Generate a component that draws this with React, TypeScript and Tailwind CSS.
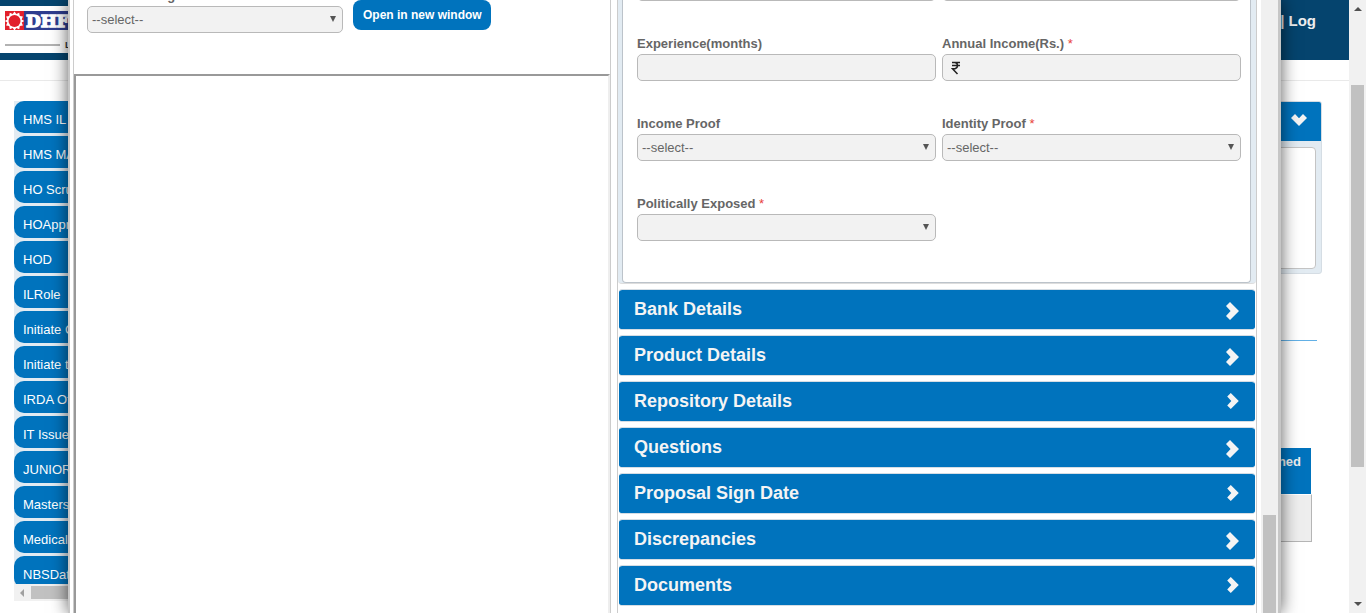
import type { ReactNode } from "react";

const roles = [
  "HMS IL", "HMS MA", "HO Scru", "HOAppr", "HOD", "ILRole", "Initiate C",
  "Initiate t", "IRDA Of", "IT Issue", "JUNIOR", "Masters", "Medical", "NBSDat",
];

const sections = [
  { title: "Bank Details", large: true },
  { title: "Product Details", large: true },
  { title: "Repository Details", large: false },
  { title: "Questions", large: true },
  { title: "Proposal Sign Date", large: false },
  { title: "Discrepancies", large: true },
  { title: "Documents", large: false },
];

function Arrow({ d, className }: { d: string; className: string }) {
  return (
    <svg viewBox="0 0 8 8" className={`h-2 w-2 ${className}`} aria-hidden="true">
      <path d={d} fill="currentColor" />
    </svg>
  );
}

function Logo() {
  return (
    <svg viewBox="0 0 112 46" className="h-[46px] w-28" role="img" aria-label="DHFL">
      <rect x="5" y="5" width="19" height="19" fill="#e2202c" />
      <path
        d="M14.5 5.5l1.8 2.5 2.9-1.2.6 3.1 3.1.6-1.2 2.9 2.5 1.6-2.5 1.6 1.2 2.9-3.1.6-.6 3.1-2.9-1.2-1.8 2.5-1.8-2.5-2.9 1.2-.6-3.1-3.1-.6 1.2-2.9L4.8 15l2.5-1.6-1.2-2.9 3.1-.6.6-3.1 2.9 1.2z"
        fill="#fff"
      />
      <circle cx="14.5" cy="14.9" r="6" fill="#e2202c" />
      <rect x="24" y="5" width="70" height="19" fill="#2e3d8f" />
      <text x="26" y="21" fill="#fff" stroke="#fff" strokeWidth="1.4" fontFamily="DejaVu Serif, serif" fontWeight="700" fontSize="17">
        DHFL
      </text>
      <path d="M5 39h55" stroke="#999" strokeWidth="1.5" />
      <text x="65" y="42" fill="#333" fontFamily="Liberation Sans, sans-serif" fontWeight="700" fontSize="9">
        Life
      </text>
    </svg>
  );
}

function ChevronRight({ large }: { large: boolean }) {
  return (
    <svg viewBox="0 0 13 18" className={large ? "mt-1 h-[18px] w-[13px]" : "h-4 w-3"} aria-hidden="true">
      <path d="M4 0L13 9L4 18L0 14L4.6 9L0 4Z" fill="#f4f4f4" />
    </svg>
  );
}

function Field({ id, label, required, children }: { id: string; label: string; required?: boolean; children: ReactNode }) {
  return (
    <div>
      <label htmlFor={id} className="block h-5 text-[13px] leading-[19px] font-bold text-[#666]">
        {label}
        {required && <span className="font-normal text-[#e8403a]"> *</span>}
      </label>
      {children}
    </div>
  );
}

const boxClass =
  "block h-[27px] w-full rounded-[5px] border border-[#b9b9b9] bg-[#f2f2f2] text-[13px] text-[#666] outline-none";

function Select({ id, value }: { id: string; value: string }) {
  return (
    <div className="relative">
      <select id={id} className={`${boxClass} appearance-none pl-1`}>
        <option>{value}</option>
      </select>
      <Arrow d="M1 1H7L4 7Z" className="pointer-events-none absolute top-[9px] right-[6px] text-[#555]" />
    </div>
  );
}

function BackgroundPage() {
  return (
    <div className="min-w-0 flex-1 overflow-hidden">
      <header className="flex h-[60px] items-start justify-between bg-[#05446e]">
        <div className="mt-1.5 h-[47px] w-32 bg-white">
          <Logo />
        </div>
        <a href="#logout" className="mt-2.5 mr-[33px] text-[15px] leading-[22px] font-bold text-[#eee]">
          | Log
        </a>
      </header>
      <div className="h-[21px] border-b border-[#e9e9e9]" />
      <div className="flex justify-between pt-5 pr-[27px] pl-3.5">
        <nav className="w-44">
          <ul className="flex h-[483px] flex-col gap-[3px] overflow-hidden bg-[#e2ebf2]">
            {roles.map((role) => (
              <li key={role} className="shrink-0">
                <a href="#role" className="block h-8 rounded-[10px] bg-[#0073bd] pt-[9px] pl-[9px] text-[13px] leading-5 text-white">
                  {role}
                </a>
              </li>
            ))}
          </ul>
          <div className="flex h-[17px] items-center bg-[#f1f1f1]">
            <Arrow d="M6 0V8L2 4Z" className="ml-1 text-[#a0a0a0]" />
            <div className="ml-[5px] h-[13px] flex-1 bg-[#c1c1c1]" />
          </div>
        </nav>
        <main className="w-64">
          <section className="overflow-hidden rounded-[3px] border border-[#d5dde4] bg-[#e2ebf2]">
            <div className="flex h-[39px] items-start justify-end bg-[#0073bd] pt-3 pr-3.5">
              <svg viewBox="0 0 16 12" className="h-3 w-4" aria-hidden="true">
                <path d="M0 4L4 0L8 4.2L12 0L16 4L8 12Z" fill="#f4f4f4" />
              </svg>
            </div>
            <div className="mr-[5px] mt-1.5 mb-1 ml-1 h-[122px] rounded-[4px] border border-[#c4c4c4] bg-white" />
          </section>
          <div className="mt-[66px] mr-[5px] border-t border-[#62b0e6]" />
          <table className="mt-[107px] mr-2.5 w-[246px] border-separate border-spacing-0">
            <thead>
              <tr>
                <th className="h-[46px] border-r border-white bg-[#0073bd] bg-clip-padding pt-1 pr-2.5 text-right align-top text-[13px] leading-5 font-bold text-[#eee]">
                  Assigned
                </th>
              </tr>
            </thead>
            <tbody>
              <tr>
                <td className="h-12 border-t border-r border-b border-[#b5b5b5] border-t-white bg-[#eee]" />
              </tr>
            </tbody>
          </table>
        </main>
      </div>
    </div>
  );
}

function DocumentPane() {
  return (
    <section className="flex min-h-0 flex-col border-x border-[#ccc]">
      <div className="flex h-[74px] shrink-0 items-start px-[13px]">
        <div className="-mt-3.5 w-64">
          <Field id="scan" label="Scanned Image">
            <Select id="scan" value="--select--" />
          </Field>
        </div>
        <button className="ml-2.5 h-[30px] rounded-lg bg-[#0073bd] pr-[9px] pl-2.5 text-xs font-bold text-white">
          Open in new window
        </button>
      </div>
      <div className="min-h-0 flex-1 border-t-2 border-r-2 border-l-2 border-t-[#999] border-r-[#eee] border-l-[#999]" />
    </section>
  );
}

function ProposalPane() {
  return (
    <section className="min-h-0 overflow-hidden border-x border-[#ccc]">
      <div className="rounded-b border-b border-[#ddd] bg-[#e2ebf2] pr-[5px] pl-1">
        <div className="overflow-hidden rounded-b border-x border-b border-[#bcc3ca] bg-white pr-[9px] pb-[41px] pl-[14px]">
          <div className="-mt-[26px] grid grid-cols-2 gap-x-1.5 gap-y-[33px]">
            <input aria-label="Occupation" className={boxClass} />
            <input aria-label="Employer" className={boxClass} />
            <Field id="experience" label="Experience(months)">
              <input id="experience" className={boxClass} />
            </Field>
            <Field id="income" label="Annual Income(Rs.)" required>
              <div className="relative">
                <input id="income" className={`${boxClass} pl-6`} />
                <svg viewBox="0 0 10 14" className="pointer-events-none absolute top-[7px] left-[9px] h-3.5 w-2.5" aria-hidden="true">
                  <path d="M1 1.5H9M1 4.5H9M1.5 1.5H4Q6.5 2 6.5 4.5T4 7.7H1.5L6.5 13" fill="none" stroke="#222" strokeWidth="1.5" />
                </svg>
              </div>
            </Field>
            <Field id="income-proof" label="Income Proof">
              <Select id="income-proof" value="--select--" />
            </Field>
            <Field id="identity-proof" label="Identity Proof" required>
              <Select id="identity-proof" value="--select--" />
            </Field>
            <Field id="exposed" label="Politically Exposed" required>
              <Select id="exposed" value="" />
            </Field>
          </div>
        </div>
      </div>
      <div className="flex flex-col gap-[5px] px-px pt-[5px]">
        {sections.map(({ title, large }) => (
          <button
            key={title}
            className="flex h-[41px] w-full items-center justify-between rounded-[3px] border-y border-[#d5dde4] bg-[#0073bd] bg-clip-padding pr-4 pb-0.5 pl-[15px] text-left text-lg leading-6 font-bold text-[#f4f4f4]"
          >
            <span>{title}</span>
            <ChevronRight large={large} />
          </button>
        ))}
      </div>
    </section>
  );
}

export default function App() {
  return (
    <div className="relative flex h-screen overflow-hidden bg-white font-['Liberation_Sans',Arial,sans-serif]">
      <BackgroundPage />
      <div className="flex w-[17px] flex-col items-center bg-[#f1f1f1] py-[5px]">
        <Arrow d="M0 6H8L4 2Z" className="text-[#505050]" />
        <div className="mt-[72px] h-[382px] w-[13px] bg-[#c1c1c1]" />
        <Arrow d="M0 2H8L4 6Z" className="mt-auto text-[#505050]" />
      </div>
      <div
        role="dialog"
        aria-label="Proposal"
        className="absolute inset-y-0 right-[85px] left-[68px] flex border-r-[3px] border-l-2 border-[#c6c6c6] bg-white pl-[3px] shadow-[0_0_16px_rgba(0,0,0,0.65)]"
      >
        <div className="grid min-w-0 flex-1 grid-cols-[538fr_640fr] grid-rows-[100%] gap-1.5 pr-1">
          <DocumentPane />
          <ProposalPane />
        </div>
        <div className="flex w-[17px] flex-col items-center justify-end bg-[#f0f0f0]">
          <div className="h-[98px] w-[13px] bg-[#c1c1c1]" />
        </div>
      </div>
    </div>
  );
}
